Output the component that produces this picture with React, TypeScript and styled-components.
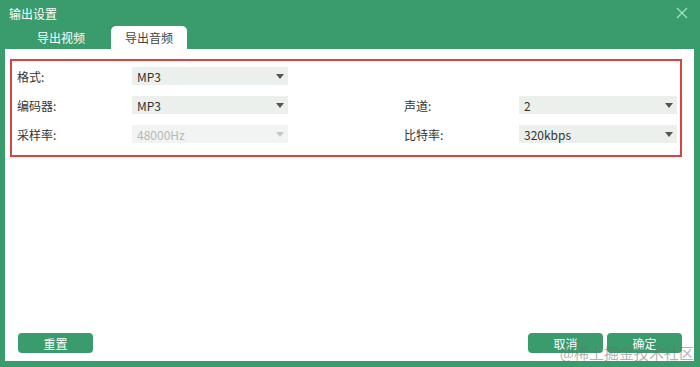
import React, {useState, FC} from 'react';
import styled, {createGlobalStyle} from 'styled-components';

const GlobalStyle = createGlobalStyle`
  html, body {
    margin: 0;
    padding: 0;
  }
  body {
    font-family: "Noto Sans CJK SC", "Noto Sans", sans-serif;
    font-size: 12px;
  }
`;

const StyledWindow = styled.div`
  position: relative;
  width: 700px;
  height: 367px;
  background: #3a9b6d;
  display: flex;
  flex-direction: column;
  overflow: hidden;
`;
const StyledTitleBar = styled.div`
  height: 26px;
  display: flex;
  align-items: center;
  justify-content: space-between;
  padding: 0 11px 0 9px;
  color: #fff;
  font-size: 12px;
`;
const StyledClose = styled.button`
  width: 14px;
  height: 14px;
  padding: 0;
  border: none;
  background: none;
  display: flex;
  align-items: center;
  justify-content: center;
  cursor: pointer;
`;
const StyledTabs = styled.ul`
  display: flex;
  gap: 12px;
  margin: 0;
  padding: 0 0 0 23px;
  list-style: none;
  height: 23px;
  > li{
    width: 76px;
    display: flex;
    align-items: center;
    justify-content: center;
    color: #fff;
    border-radius: 5px 5px 0 0;
    cursor: pointer;
    &.selected{
      background: #fff;
      color: #444;
    }
  }
`;
const StyledPanel = styled.div`
  flex: 1;
  margin: 0 6px 6px 5px;
  background: #fff;
  display: flex;
  flex-direction: column;
  padding: 10px 12px 8px 5px;
`;
const StyledBox = styled.div`
  border: 2px solid #db4343;
  padding: 6px 7px 12px 5px;
  display: grid;
  grid-template-columns: 115px 156px 116px 115px 158px;
  grid-auto-rows: 18px;
  row-gap: 11px;
  align-items: center;
`;
const StyledLabel = styled.span<{$col?: number}>`
  grid-column: ${p => p.$col || 1};
  color: #333;
  font-size: 12px;
`;
const StyledSelect = styled.div<{$col?: number, $disabled?: boolean}>`
  grid-column: ${p => p.$col || 2};
  height: 18px;
  background: ${p => p.$disabled ? '#f1f4f2' : '#ebf0ed'};
  color: ${p => p.$disabled ? '#b5b9b7' : '#333'};
  display: flex;
  align-items: center;
  justify-content: space-between;
  padding: 0 4px 0 5px;
  font-size: 12px;
  cursor: ${p => p.$disabled ? 'default' : 'pointer'};
  &::after{
    content: '';
    border-left: 4px solid transparent;
    border-right: 4px solid transparent;
    border-top: 5px solid ${p => p.$disabled ? '#c4c8c6' : '#555'};
  }
`;
const StyledFooter = styled.div`
  margin-top: auto;
  display: flex;
  align-items: center;
  padding-left: 8px;
  gap: 4px;
  > .spacer{
    flex: 1;
  }
`;
const StyledButton = styled.button`
  width: 75px;
  height: 20px;
  border: none;
  border-radius: 4px;
  background: #3a9b6d;
  color: #fff;
  font-family: inherit;
  font-size: 12px;
  padding: 0;
  cursor: pointer;
`;
const StyledWatermark = styled.span`
  position: absolute;
  right: 6px;
  bottom: 4px;
  font-size: 15px;
  color: rgba(110,110,110,.55);
  pointer-events: none;
`;

type Tab = { id: number, name: string }

const App: FC = () => {
  const [tabs] = useState<Tab[]>([{id: 0, name: '导出视频'}, {id: 1, name: '导出音频'}]);
  const [selectedTab, setSelectedTab] = useState('导出音频');

  return (
    <StyledWindow>
      <GlobalStyle/>
      <StyledTitleBar>
        <span>输出设置</span>
        <StyledClose>
          <svg width="12" height="12" viewBox="0 0 12 12">
            <path d="M1 1 L11 11 M11 1 L1 11" stroke="#a6e3c5" strokeWidth="1.1"/>
          </svg>
        </StyledClose>
      </StyledTitleBar>
      <StyledTabs>
        {
          tabs.map((item) => (
            <li
              key={item.id}
              onClick={() => setSelectedTab(item.name)}
              className={selectedTab === item.name ? 'selected' : ''}
            >{item.name}</li>
          ))
        }
      </StyledTabs>
      <StyledPanel>
        <StyledBox>
          <StyledLabel>格式:</StyledLabel>
          <StyledSelect>MP3</StyledSelect>

          <StyledLabel>编码器:</StyledLabel>
          <StyledSelect>MP3</StyledSelect>
          <StyledLabel $col={4}>声道:</StyledLabel>
          <StyledSelect $col={5}>2</StyledSelect>

          <StyledLabel>采样率:</StyledLabel>
          <StyledSelect $disabled>48000Hz</StyledSelect>
          <StyledLabel $col={4}>比特率:</StyledLabel>
          <StyledSelect $col={5}>320kbps</StyledSelect>
        </StyledBox>
        <StyledFooter>
          <StyledButton>重置</StyledButton>
          <div className="spacer"/>
          <StyledButton>取消</StyledButton>
          <StyledButton>确定</StyledButton>
        </StyledFooter>
      </StyledPanel>
      <StyledWatermark>@稀土掘金技术社区</StyledWatermark>
    </StyledWindow>
  );
};

export default App;
